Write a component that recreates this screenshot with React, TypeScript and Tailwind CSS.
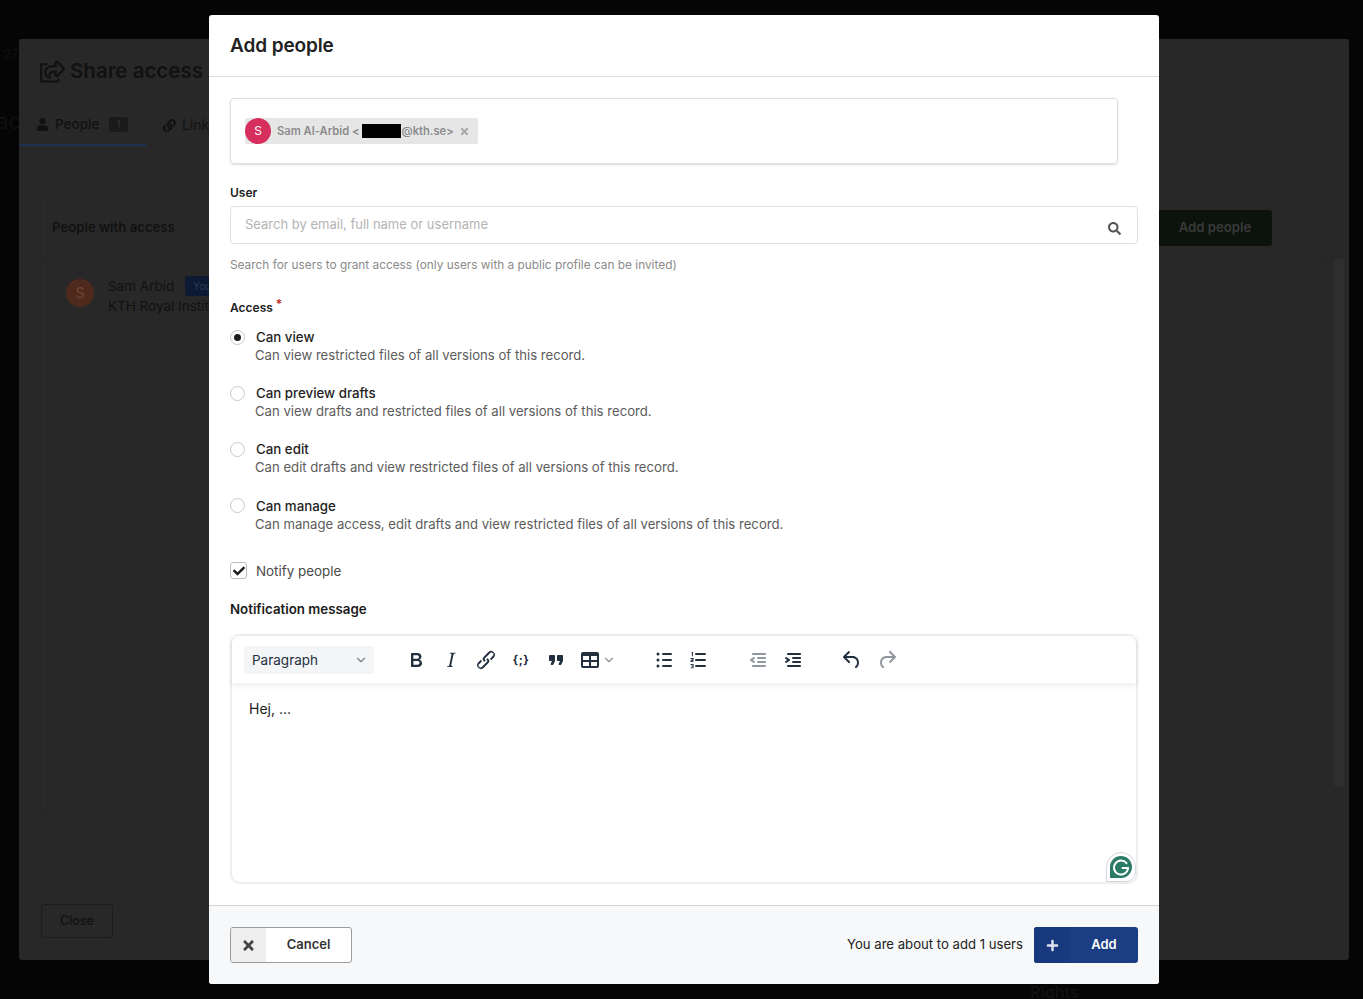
import { FaCheck, FaLink, FaPlus, FaRegShareSquare, FaSearch, FaTimes, FaUser } from "react-icons/fa";
import { ChevronDown } from "lucide-react";

const sans = "font-['Inter','Noto_Sans',sans-serif]";

const accessOptions = [
    { label: "Can view", text: "Can view restricted files of all versions of this record.", checked: true },
    { label: "Can preview drafts", text: "Can view drafts and restricted files of all versions of this record." },
    { label: "Can edit", text: "Can edit drafts and view restricted files of all versions of this record." },
    {
        label: "Can manage",
        text: "Can manage access, edit drafts and view restricted files of all versions of this record.",
    },
];

const icons = {
    bold: "M7.8 19c-.3 0-.5 0-.6-.2l-.2-.5V5.7c0-.2 0-.4.2-.5l.6-.2h5c1.5 0 2.7.3 3.5 1 .7.6 1.1 1.4 1.1 2.5a3 3 0 0 1-.6 1.9c-.4.6-1 1-1.6 1.2.4.1.9.3 1.3.6s.8.7 1 1.2c.4.4.5 1 .5 1.6 0 1.3-.4 2.3-1.3 3-.8.7-2.1 1-3.8 1H7.8zm5-8.3c.6 0 1.2-.1 1.6-.5.4-.3.6-.7.6-1.3 0-1.1-.8-1.7-2.3-1.7H9.3v3.5h3.4zm.5 6c.7 0 1.3-.1 1.7-.4.4-.4.6-.9.6-1.5s-.2-1-.7-1.4c-.4-.3-1-.4-2-.4H9.4v3.8h4z",
    italic: "M16.7 4.7l-.1.9h-.3c-.6 0-1 0-1.4.3-.3.3-.4.6-.5 1.1l-2.1 9.8v.6c0 .5.4.8 1.4.8h.2l-.2.8H8l.2-.8h.2c1.1 0 1.8-.5 2-1.5l2-9.8.1-.5c0-.6-.4-.8-1.4-.8h-.3l.2-.9h5.8z",
    link: "M6.2 12.3a1 1 0 0 1 1.4 1.4l-2 2a2 2 0 1 0 2.6 2.8l4.8-4.8a1 1 0 0 0 0-1.4 1 1 0 1 1 1.4-1.3 2.9 2.9 0 0 1 0 4L9.6 20a3.9 3.9 0 0 1-5.5-5.5l2-2zm11.6-.6a1 1 0 0 1-1.4-1.4l2-2a2 2 0 1 0-2.6-2.8L11 10.3a1 1 0 0 0 0 1.4A1 1 0 1 1 9.6 13a2.9 2.9 0 0 1 0-4L14.4 4a3.9 3.9 0 0 1 5.5 5.5l-2 2z",
    quote: "M7.5 17h.9c.4 0 .7-.2.9-.6L11 13V8c0-.6-.4-1-1-1H6a1 1 0 0 0-1 1v4c0 .6.4 1 1 1h2l-1.3 2.7a1 1 0 0 0 .8 1.3zm8 0h.9c.4 0 .7-.2.9-.6L19 13V8c0-.6-.4-1-1-1h-4a1 1 0 0 0-1 1v4c0 .6.4 1 1 1h2l-1.3 2.7a1 1 0 0 0 .8 1.3z",
    table: "M19 4a2 2 0 0 1 2 2v12a2 2 0 0 1-2 2H5a2 2 0 0 1-2-2V6c0-1.1.9-2 2-2h14zM5 14v4h6v-4H5zm14 0h-6v4h6v-4zm0-6h-6v4h6V8zM5 12h6V8H5v4z",
    outdent: "M7 5h12c.6 0 1 .4 1 1s-.4 1-1 1H7a1 1 0 1 1 0-2zm5 4h7c.6 0 1 .4 1 1s-.4 1-1 1h-7a1 1 0 0 1 0-2zm0 4h7c.6 0 1 .4 1 1s-.4 1-1 1h-7a1 1 0 0 1 0-2zm-5 4h12a1 1 0 0 1 0 2H7a1 1 0 0 1 0-2zm1.6-3.8a1 1 0 0 1-1.2 1.6l-3-2a1 1 0 0 1 0-1.6l3-2a1 1 0 0 1 1.2 1.6L6.8 12l1.8 1.2z",
    indent: "M7 5h12c.6 0 1 .4 1 1s-.4 1-1 1H7a1 1 0 1 1 0-2zm5 4h7c.6 0 1 .4 1 1s-.4 1-1 1h-7a1 1 0 0 1 0-2zm0 4h7c.6 0 1 .4 1 1s-.4 1-1 1h-7a1 1 0 0 1 0-2zm-5 4h12a1 1 0 0 1 0 2H7a1 1 0 0 1 0-2zm-2.6-3.8L6.2 12l-1.8-1.2a1 1 0 0 1 1.2-1.6l3 2a1 1 0 0 1 0 1.6l-3 2a1 1 0 1 1-1.2-1.6z",
    undo: "M6.4 8H12c3.7 0 6.2 2 6.8 5.1.6 2.7-.4 5.6-2.3 6.8a1 1 0 0 1-1-1.8c1.1-.6 1.8-2.7 1.4-4.6-.5-2.1-2.1-3.5-4.9-3.5H6.4l3.3 3.3a1 1 0 1 1-1.4 1.4l-5-5a1 1 0 0 1 0-1.4l5-5a1 1 0 0 1 1.4 1.4L6.4 8z",
    redo: "M17.6 10H12c-2.8 0-4.4 1.4-4.9 3.5-.4 2 .3 4 1.4 4.6a1 1 0 1 1-1 1.8c-2-1.2-2.9-4.1-2.3-6.8.6-3 3-5.1 6.8-5.1h5.6l-3.3-3.3a1 1 0 1 1 1.4-1.4l5 5a1 1 0 0 1 0 1.4l-5 5a1 1 0 0 1-1.4-1.4l3.3-3.3z",
};

function ToolIcon({ d, muted }: { d: string; muted?: boolean }) {
    return (
        <svg viewBox="0 0 24 24" className={muted ? "size-6 fill-[#222f3e]/50" : "size-6 fill-[#222f3e]"} aria-hidden>
            <path d={d} />
        </svg>
    );
}

function BulletListIcon() {
    return (
        <svg viewBox="0 0 24 24" className="size-6 fill-[#222f3e]" aria-hidden>
            <path d="M11 5h8a1 1 0 0 1 0 2h-8a1 1 0 0 1 0-2zm0 6h8a1 1 0 0 1 0 2h-8a1 1 0 0 1 0-2zm0 6h8a1 1 0 0 1 0 2h-8a1 1 0 0 1 0-2z" />
            <circle cx="6" cy="6" r="1.5" />
            <circle cx="6" cy="12" r="1.5" />
            <circle cx="6" cy="18" r="1.5" />
        </svg>
    );
}

function NumberListIcon() {
    return (
        <svg viewBox="0 0 24 24" className="size-6 fill-[#222f3e]" aria-hidden>
            <path d="M10 7h9a1 1 0 0 0 0-2h-9a1 1 0 0 0 0 2zm0 6h9a1 1 0 0 0 0-2h-9a1 1 0 0 0 0 2zm0 6h9a1 1 0 0 0 0-2h-9a1 1 0 0 0 0 2z" />
            <path d="M5.600 4h1.300v4.300H5.900V5h-.3zM4.600 10h3v2.200l-1.600 1h1.600v.9h-3v-1.700l1.900-1.500H4.600zM4.600 16h3v4.300h-3v-.9h2v-.8H5.300v-.8h1.300v-.9h-2z" />
        </svg>
    );
}

function GrammarlyBadge() {
    return (
        <div className="absolute right-0 bottom-0 flex size-[30px] items-center justify-center rounded-[50%_50%_10px_0] border border-[#d4d6e0] bg-white">
            <svg viewBox="0 0 24 24" className="size-[24px]" aria-hidden>
                <path d="M12 1a11 11 0 1 1 0 22H1V12A11 11 0 0 1 12 1z" fill="#2a7a66" />
                <path
                    d="M17.500 8.200A7 7 0 1 0 19 13h-5.500"
                    fill="none"
                    stroke="#fff"
                    strokeWidth="2"
                    strokeLinecap="round"
                />
            </svg>
        </div>
    );
}

function BackgroundPage() {
    return (
        <div className="relative flex h-[999px] flex-col bg-[#050505] pt-[39px] pl-[19px]">
            {/* bits of the page under the first dialog */}
            <span className="absolute top-[45px] left-[3px] text-[13px] text-[#101010]">27</span>
            <span className="absolute top-[105px] -left-[4px] text-[22px] text-[#101010]">ac</span>
            <span className="absolute top-[980px] left-[1030px] text-[16px] font-semibold text-[#101010]">Rights</span>
            <div className="relative flex h-[921px] w-[1330px] flex-col rounded-[3px] bg-[#282828] text-[#111111]">
                <div className="flex h-[66px] shrink-0 items-center gap-[5px] border-b border-[#252525] pl-[21px]">
                    <FaRegShareSquare className="size-[25px]" />
                    <span className="text-[20.500px] leading-none font-semibold">Share access</span>
                </div>
                <div className="flex h-[41px] shrink-0 border-b border-[#252525] text-sm">
                    <div className="-mb-[1px] flex w-[127px] items-center gap-[6px] border-b-2 border-[#1e3050] pl-[17px] font-medium">
                        <FaUser className="size-[13px]" />
                        <span className="text-[13.500px]">People</span>
                        <span className="ml-[4px] rounded-[3px] bg-[#1a1a1a] px-[7px] text-[10px] leading-[15px] text-[#2e2e2e]">
                            1
                        </span>
                    </div>
                    <div className="flex items-center gap-[6px] pl-[17px]">
                        <FaLink className="size-[13px]" />
                        <span>Links</span>
                    </div>
                </div>
                <div className="flex flex-1 gap-[7px] pt-[50px] pl-[21px]">
                    <div className="h-[618px] w-[1287px] rounded-[3px] border border-[#252525]">
                        <div className="flex h-[62px] items-center justify-between border-b border-[#252525] pr-[54px] pl-[11px]">
                            <span className="text-[13.200px] font-semibold">People with access</span>
                            <span className="flex h-[36px] w-[114px] items-center justify-center rounded-[3px] bg-[#0c130c] text-[13.200px] font-semibold text-[#3a3a3a]">
                                Add people
                            </span>
                        </div>
                        <div className="flex gap-[14px] pt-[20px] pl-[25px]">
                            <div className="flex size-[28px] items-center justify-center rounded-full bg-[#4f2a1c] text-sm text-[#6f4636]">
                                S
                            </div>
                            <div className="-mt-[3px] text-[13.500px] leading-[20px]">
                                <div className="flex items-center gap-[11px]">
                                    Sam Arbid
                                    <span className="rounded-[3px] bg-[#0e1a33] px-[8px] text-[10px] text-[#2c3a55]">You</span>
                                </div>
                                <div>KTH Royal Institute of Technology</div>
                            </div>
                        </div>
                    </div>
                    <div className="mt-[63px] h-[527px] w-[10px] bg-[#2e2e2e]" />
                </div>
                <div className="flex h-[78px] shrink-0 border-t border-[#252525] pt-[21px] pl-[22px]">
                    <span className="flex h-[34px] w-[72px] items-center justify-center rounded-[3px] border border-[#1c1c1c] text-[12.500px] font-medium">
                        Close
                    </span>
                </div>
            </div>
        </div>
    );
}

function AddPeopleModal() {
    return (
        <div
            role="dialog"
            className={`absolute top-[15px] left-[209px] flex h-[969px] w-[950px] flex-col rounded-[3px] bg-white text-[#222222] ${sans}`}
        >
            <div className="flex h-[62px] shrink-0 items-center border-b border-[#dddddd] pt-[2px] pl-[21px]">
                <h2 className="text-[19px] font-semibold tracking-[-0.1px]">Add people</h2>
            </div>

            <div className="flex flex-1 flex-col px-[21px] pt-[21px]">
                <div className="flex h-[66px] w-[888px] shrink-0 items-center rounded-[4px] border border-[#dededf] pl-[14px] shadow-[0_1px_2px_rgba(34,36,38,0.15)]">
                    <div className="flex h-[26px] items-center rounded-[2px] bg-[#e6e6e6] pr-[8px] text-[11.200px] font-semibold text-[#8c8c8c]">
                        <span className="flex size-[26px] items-center justify-center rounded-full bg-[#d62f5d] text-xs font-normal text-white">
                            S
                        </span>
                        <span className="ml-[6px]">Sam Al-Arbid &lt;</span>
                        <span className="ml-[3px] h-[14px] w-[39px] bg-black" />
                        <span>@kth.se&gt;</span>
                        <FaTimes className="ml-[5px] size-[11px] text-[#a8a8a8]" />
                    </div>
                </div>

                <label className="mt-[21px] text-[12px] leading-[16px] font-semibold">User</label>
                <div className="mt-[5px] flex h-[38px] shrink-0 items-center justify-between rounded-[4px] border border-[#dedede] pr-[16px] pl-[14px]">
                    <span className="text-[13px] text-[#b4b4b4]">Search by email, full name or username</span>
                    <FaSearch className="mt-[6px] size-[13px] text-[#555555]" />
                </div>
                <p className="mt-[13px] text-[11.850px] leading-[16px] text-[#8a8a8a]">
                    Search for users to grant access (only users with a public profile can be invited)
                </p>

                <label className="mt-[27px] h-[16px] text-[12px] leading-[16px] font-semibold">
                    Access
                    <span className="ml-[3px] align-[4px] text-[12px] leading-[8px] text-[#c0281f]">*</span>
                </label>

                <div className="mt-[13px] flex flex-col gap-[20.200px]">
                    {accessOptions.map((option) => (
                        <div key={option.label} className="flex h-[36px] flex-col">
                            <div className="flex h-[18px] shrink-0 items-center gap-[11px]">
                                <span className="mb-[2px] flex size-[15px] items-center justify-center rounded-full border border-[#c8c8c8] bg-white">
                                    {option.checked && <span className="size-[7px] rounded-full bg-[#1c1c1c]" />}
                                </span>
                                <span className="text-[13.300px] font-medium text-[#1e1e1e]">{option.label}</span>
                            </div>
                            <p className="-mt-[1px] pl-[25px] text-[13.150px] leading-[18px] text-[#5c5c5c]">{option.text}</p>
                        </div>
                    ))}
                </div>

                <div className="mt-[27px] flex items-center gap-[9px]">
                    <span className="flex size-[17px] items-center justify-center rounded-[3px] border border-[#bdbdbd] bg-white">
                        <FaCheck className="size-[12px] text-[#1c1c1c]" />
                    </span>
                    <span className="text-[13.400px] text-[#4a4a4a]">Notify people</span>
                </div>

                <label className="mt-[19px] text-[13.300px] leading-[18px] font-semibold text-[#1c1c1c]">
                    Notification message
                </label>

                <div className="relative mt-[16px] h-[250px] shrink-0 rounded-[10px] border-2 border-[#eeeeee]">
                    <div className="flex h-[47px] items-center pt-[1px] pl-[12px] shadow-[0_2px_6px_rgba(34,47,62,0.1)]">
                        <div className="flex h-[28px] w-[130px] items-center justify-between rounded-[3px] bg-[#f4f5f6] pt-[1px] pr-[6px] pl-[8px] text-[13.500px] text-[#222f3e]">
                            Paragraph
                            <ChevronDown className="size-[14px] text-[#777f89]" strokeWidth={2} />
                        </div>
                        <div className="ml-[30px] flex items-center gap-[11px]">
                            <ToolIcon d={icons.bold} />
                            <ToolIcon d={icons.italic} />
                            <ToolIcon d={icons.link} />
                            <span className="flex w-[24px] justify-center text-[12px] font-bold tracking-[0.5px] text-[#222f3e]">
                                {"{;}"}
                            </span>
                            <ToolIcon d={icons.quote} />
                            <div className="-ml-[1px] flex w-[39px] items-center">
                                <ToolIcon d={icons.table} />
                                <ChevronDown className="size-[14px] text-[#8a9099]" />
                            </div>
                        </div>
                        <div className="ml-[35px] flex items-center gap-[10px]">
                            <BulletListIcon />
                            <NumberListIcon />
                        </div>
                        <div className="ml-[36px] flex items-center gap-[11px]">
                            <ToolIcon d={icons.outdent} muted />
                            <ToolIcon d={icons.indent} />
                        </div>
                        <div className="ml-[35px] flex items-center gap-[11px]">
                            <ToolIcon d={icons.undo} />
                            <ToolIcon d={icons.redo} muted />
                        </div>
                    </div>
                    <div className="pt-[16px] pl-[17px] text-[14px] leading-[20px] text-[#1c1c1c]">Hej, ...</div>
                    <GrammarlyBadge />
                </div>
            </div>

            <div className="flex h-[79px] shrink-0 items-center justify-between rounded-b-[3px] border-t border-[#d4d4d5] bg-[#f7f8fa] px-[21px]">
                <button className="flex h-[36px] w-[122px] items-center overflow-hidden rounded-[3px] border border-[#9c9c9c] bg-white text-[13px] font-semibold text-[#333333]">
                    <span className="flex h-full w-[35px] items-center justify-center bg-[#eeeeee]">
                        <FaTimes className="size-[15px] text-[#444444]" />
                    </span>
                    <span className="flex-1 text-center">Cancel</span>
                </button>
                <div className="flex items-center gap-[11px]">
                    <span className="text-[13.150px] text-[#222222]">You are about to add 1 users</span>
                    <button className="flex h-[36px] w-[104px] items-center overflow-hidden rounded-[3px] bg-[#1b3d84] text-[13px] font-semibold text-white">
                        <span className="flex h-full w-[36px] items-center justify-center bg-[#18397e]">
                            <FaPlus className="size-[13px] text-[#dfe4ef]" />
                        </span>
                        <span className="flex-1 text-center">Add</span>
                    </button>
                </div>
            </div>
        </div>
    );
}

export default function App() {
    return (
        <div className={`relative h-[999px] overflow-hidden ${sans}`}>
            <BackgroundPage />
            <AddPeopleModal />
        </div>
    );
}
